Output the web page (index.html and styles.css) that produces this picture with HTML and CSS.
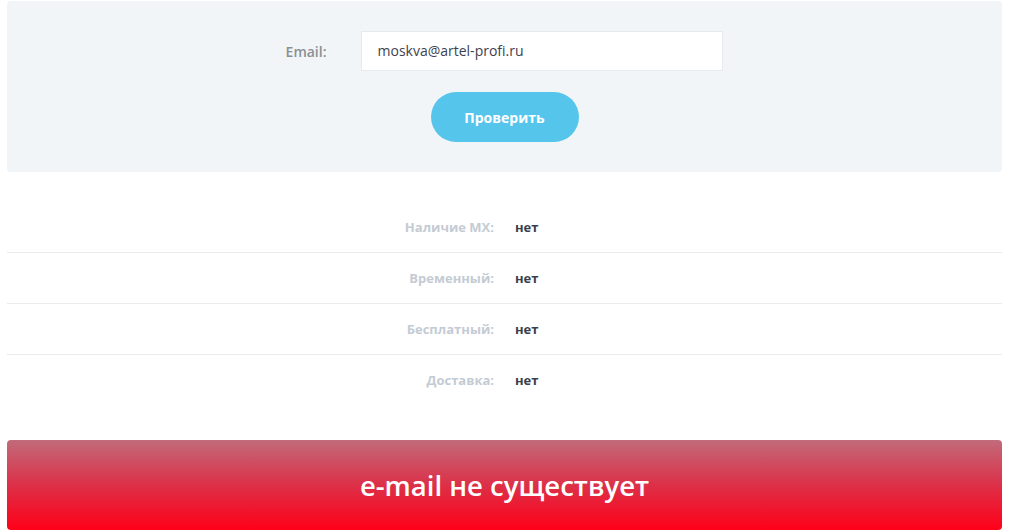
FILE: index.html
```html
<!DOCTYPE html>
<html lang="ru">
<head>
<meta charset="utf-8">
<title>Проверка email</title>
<link rel="stylesheet" href="styles.css">
</head>
<body>
<div class="page">
  <form class="check-panel">
    <div class="field">
      <label class="field-label" for="email">Email:</label>
      <div class="field-input" id="email">moskva@artel-profi.ru</div>
    </div>
    <button type="button" class="check-btn">Проверить</button>
  </form>

  <div class="results">
    <div class="row"><span class="row-label">Наличие MX:</span><span class="row-value">нет</span></div>
    <div class="row"><span class="row-label">Временный:</span><span class="row-value">нет</span></div>
    <div class="row"><span class="row-label">Бесплатный:</span><span class="row-value">нет</span></div>
    <div class="row"><span class="row-label">Доставка:</span><span class="row-value">нет</span></div>
  </div>

  <div class="verdict">e-mail не существует</div>
</div>
</body>
</html>
```

FILE: styles.css
```css
html, body {
  margin: 0;
  padding: 0;
  background: #ffffff;
}

body {
  font-family: "Open Sans", "DejaVu Sans", sans-serif;
}

.page {
  width: 995px;
  margin-left: 7px;
  padding-top: 1px;
}

.check-panel {
  background: #f2f5f7;
  border-radius: 4px;
  height: 171px;
  box-sizing: border-box;
  padding-top: 30px;
  display: flex;
  flex-direction: column;
  align-items: center;
  margin: 0;
}

.field {
  display: flex;
  align-items: center;
  margin-left: -4px;
}

.field-label {
  width: 44px;
  font-size: 14px;
  font-weight: 600;
  color: #8a8f94;
  margin-right: 34px;
  text-align: right;
}

.field-input {
  width: 344px;
  height: 38px;
  line-height: 38px;
  background: #ffffff;
  border: 1px solid #e6eaed;
  padding-left: 16px;
  font-size: 14px;
  font-weight: 500;
  color: #3c4250;
}

.check-btn {
  margin-top: 21px;
  width: 148px;
  height: 50px;
  border: none;
  border-radius: 25px;
  background: #56c5ec;
  color: #ffffff;
  font-family: inherit;
  font-size: 14px;
  font-weight: 700;
  padding: 0;
}

.results {
  padding-top: 30px;
}

.row {
  display: flex;
  align-items: center;
  height: 50px;
  border-bottom: 1px solid #e9ecef;
}

.row:last-child {
  border-bottom: none;
}

.row-label {
  width: 487px;
  text-align: right;
  font-size: 13px;
  font-weight: 700;
  color: #c4cbd4;
}

.row-value {
  margin-left: 21px;
  font-size: 13px;
  font-weight: 700;
  color: #3a3f4b;
}

.verdict {
  margin-top: 35px;
  height: 90px;
  border-radius: 4px;
  background: linear-gradient(to bottom, #c16b7a 0%, #dc3048 50%, #ff0018 100%);
  color: #ffffff;
  font-size: 27.5px;
  font-weight: 600;
  display: flex;
  align-items: center;
  justify-content: center;
}
```
